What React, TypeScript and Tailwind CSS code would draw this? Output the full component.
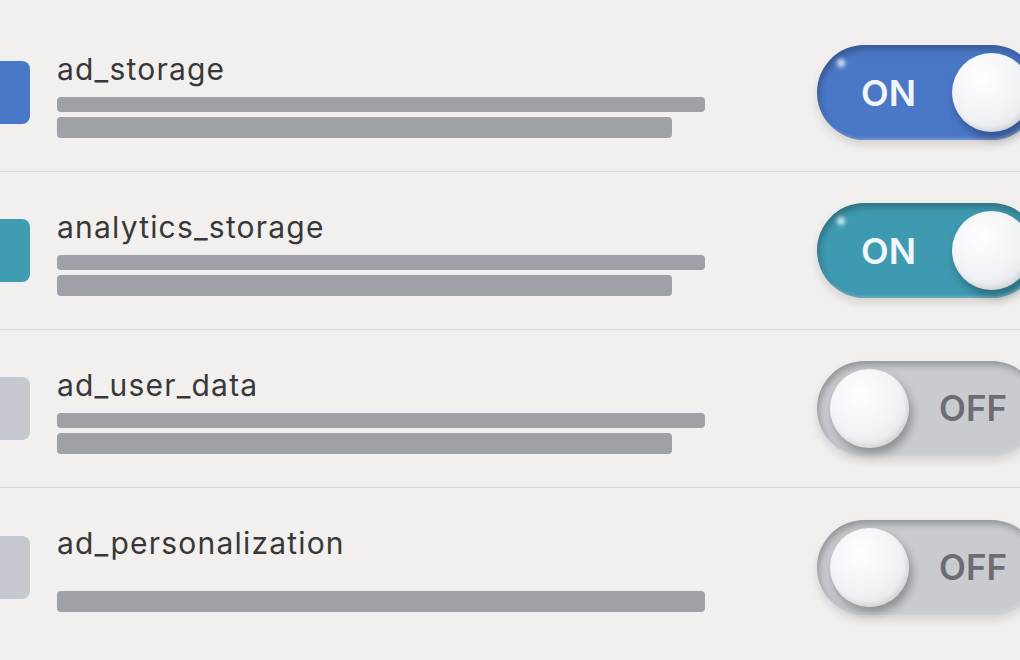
import React from "react"

type Row = {
  name: string
  on: boolean
  color: string
  track: string
  bars: number
}

const rows: Row[] = [
  { name: "ad_storage", on: true, color: "bg-[#4a78c9]", track: "bg-[#4a77c6]", bars: 2 },
  { name: "analytics_storage", on: true, color: "bg-[#3f9cb1]", track: "bg-[#3e9ab0]", bars: 2 },
  { name: "ad_user_data", on: false, color: "bg-[#c5c8cf]", track: "bg-[#c9cbd0]", bars: 2 },
  { name: "ad_personalization", on: false, color: "bg-[#c5c8cf]", track: "bg-[#c9cbd0]", bars: 1 },
]

function Knob() {
  return (
    <div className="h-[79px] w-[79px] shrink-0 rounded-full bg-[radial-gradient(circle_at_38%_32%,#ffffff_0%,#f1f2f5_55%,#d9dbe0_100%)] shadow-[3px_6px_10px_rgba(0,0,0,0.3),inset_-2px_-3px_4px_rgba(0,0,0,0.08)]" />
  )
}

function Toggle({ on, track }: { on: boolean; track: string }) {
  return (
    <div
      className={`relative -mr-[19px] ml-auto flex h-[95px] w-[222px] shrink-0 items-center rounded-full ${track} shadow-[inset_2px_4px_7px_rgba(0,0,0,0.28),inset_-1px_-2px_3px_rgba(255,255,255,0.25),0_5px_10px_rgba(0,0,0,0.12)]`}
    >
      {on ? (
        <>
          <div className="absolute left-[20px] top-[14px] h-[8px] w-[8px] rounded-full bg-white/80 blur-[2px]" />
          <span className="pl-[44px] text-[36px] font-semibold leading-none text-[#f1f5fc]">
            ON
          </span>
          <div className="ml-auto pr-[8px]">
            <Knob />
          </div>
        </>
      ) : (
        <>
          <div className="pl-[13px]">
            <Knob />
          </div>
          <span className="pl-[30px] text-[35px] font-semibold leading-none text-[#6c6d71]">
            OFF
          </span>
        </>
      )}
    </div>
  )
}

export default function App() {
  return (
    <div className="h-[660px] w-[1020px] overflow-hidden bg-[#f2f0ef] pt-[14px] [font-family:Inter,'Liberation_Sans',sans-serif]">
      {rows.map((row, i) => (
        <div
          key={row.name}
          className={`flex h-[158px] items-center ${i < rows.length - 1 ? "border-b border-[#d8d6d5]" : ""}`}
        >
          {/* colour tab */}
          <div className={`-ml-[20px] h-[63px] w-[50px] shrink-0 rounded-[8px] ${row.color}`} />

          {/* label + placeholder lines */}
          <div className="ml-[27px] w-[648px] self-start pt-[40px]">
            <div className="text-[30px] leading-[30px] tracking-[1.2px] text-[#383838]">{row.name}</div>
            <div className="mt-[13px] flex flex-col gap-[5px]">
              <div className={`h-[15px] w-[648px] rounded-[4px] bg-[#a0a1a6] ${row.bars < 2 ? "invisible" : ""}`} />
              <div className={`h-[21px] rounded-[4px] bg-[#a0a1a6] ${row.bars < 2 ? "w-[648px]" : "w-[615px]"}`} />
            </div>
          </div>

          <Toggle on={row.on} track={row.track} />
        </div>
      ))}
    </div>
  )
}
